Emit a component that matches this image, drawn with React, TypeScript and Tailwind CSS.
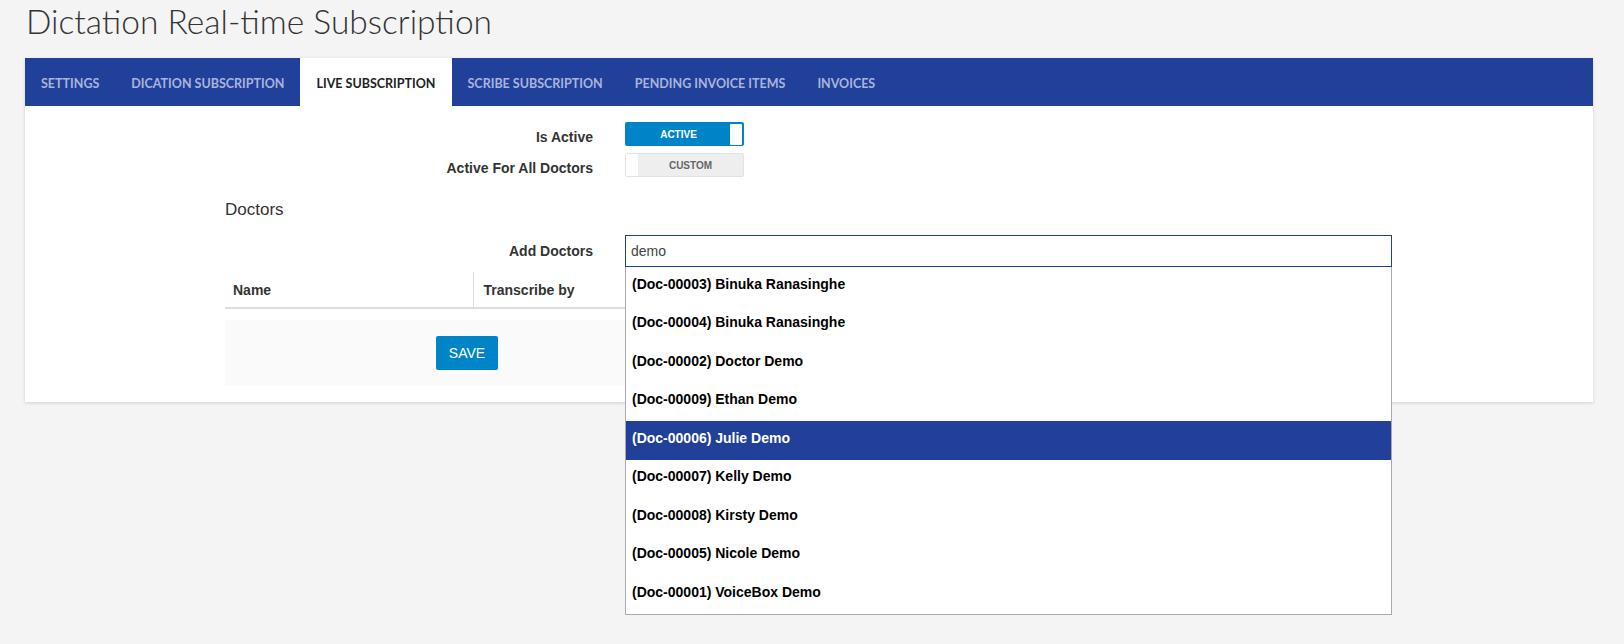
import { useState } from 'react';

const tabs = [
  'Settings',
  'Dication Subscription',
  'Live Subscription',
  'Scribe Subscription',
  'Pending Invoice Items',
  'Invoices',
];

const doctors = [
  '(Doc-00003) Binuka Ranasinghe',
  '(Doc-00004) Binuka Ranasinghe',
  '(Doc-00002) Doctor Demo',
  '(Doc-00009) Ethan Demo',
  '(Doc-00006) Julie Demo',
  '(Doc-00007) Kelly Demo',
  '(Doc-00008) Kirsty Demo',
  '(Doc-00005) Nicole Demo',
  '(Doc-00001) VoiceBox Demo',
];

export default function App() {
  const [activeTab, setActiveTab] = useState(2);
  const [query, setQuery] = useState('demo');
  const [hovered, setHovered] = useState(4);

  return (
    <div className="min-h-[644px] bg-[#f4f4f4] pl-[25px] pb-10" style={{ fontFamily: 'Arial, "Liberation Sans", sans-serif' }}>
      {/* Page title */}
      <h1 className="pt-px pb-[17px] pl-px text-[33.5px] leading-[40px] font-light text-[#333]" style={{ fontFamily: 'Lato, "Open Sans", sans-serif' }}>
        Dictation Real-time Subscription
      </h1>

      <div className="w-[1568px] bg-white shadow-[0_1px_3px_rgba(0,0,0,0.15)]">
        {/* Tabs */}
        <div className="flex h-[48px] bg-[#21409a]" style={{ fontFamily: 'Lato, "Open Sans", sans-serif' }}>
          {tabs.map((t, i) => (
            <button
              key={t}
              onClick={() => setActiveTab(i)}
              className={`px-4 pt-[4px] text-[12.5px] font-bold uppercase ${
                i === activeTab ? 'bg-white text-[#222]' : 'text-[#a9b4dd]'
              }`}
            >
              {t}
            </button>
          ))}
        </div>

        {/* Form */}
        <div className="ml-[200px] w-[1167px] pt-4 pb-4 text-[#333]">
          <div className="flex items-center">
            <label className="w-[368px] translate-y-[3px] text-right text-[14px] font-bold">Is Active</label>
            <div className="ml-[32px] flex h-[24px] w-[119px] items-center rounded-[2px] bg-[#0084c8] pl-[2px] pr-[2px]">
              <span className="flex-1 text-center text-[10px] font-bold text-white">ACTIVE</span>
              <span className="h-[21px] w-[12px] rounded-[1px] bg-white" />
            </div>
          </div>
          <div className="mt-[7px] flex items-center">
            <label className="w-[368px] translate-y-[3px] text-right text-[14px] font-bold">Active For All Doctors</label>
            <div className="ml-[32px] flex h-[24px] w-[119px] items-center rounded-[2px] border border-[#e2e2e2] bg-[#eeeeee]">
              <span className="h-[22px] w-[12px] bg-white" />
              <span className="flex-1 text-center text-[10px] font-bold text-[#666]">CUSTOM</span>
            </div>
          </div>

          <div className="mt-[24px] text-[17px] leading-[18px]">Doctors</div>

          <div className="mt-[16px] flex items-center">
            <label className="w-[368px] text-right text-[14px] font-bold">Add Doctors</label>
            <div className="relative ml-[32px] flex-1">
              <input
                value={query}
                onChange={(e) => setQuery(e.target.value)}
                className="h-[32px] w-full border border-[#21409a] px-[5px] text-[14px] text-[#444] outline-none"
              />
              {/* Autocomplete menu */}
              <ul className="absolute left-0 right-0 top-[32px] z-10 border border-t-0 border-[#aaaaaa] bg-white">
                {doctors.map((d, i) => (
                  <li
                    key={d}
                    onMouseEnter={() => setHovered(i)}
                    className={`flex h-[38.5px] items-center px-[6px] pb-[4px] text-[14px] font-bold ${
                      i === hovered ? 'bg-[#21409a] text-white' : 'text-black'
                    }`}
                  >
                    {d}
                  </li>
                ))}
              </ul>
            </div>
          </div>

          {/* Table */}
          <table className="mt-[5px] w-full border-collapse text-[14px]">
            <thead>
              <tr className="border-b-2 border-[#dddddd]">
                <th className="h-[36px] w-[248px] border-r border-[#dddddd] px-[8px] pt-[2px] text-left font-bold">Name</th>
                <th className="w-[248px] px-[10px] pt-[2px] text-left font-bold">Transcribe by</th>
                <th className="px-[10px] text-left font-bold" />
              </tr>
            </thead>
          </table>

          <div className="mt-[11px] flex h-[66px] items-center bg-[#fafafa] pl-[211px]">
            <button className="h-[34px] w-[62px] rounded-[2px] bg-[#0084c8] text-[14px] text-white">SAVE</button>
          </div>
        </div>
      </div>
    </div>
  );
}
